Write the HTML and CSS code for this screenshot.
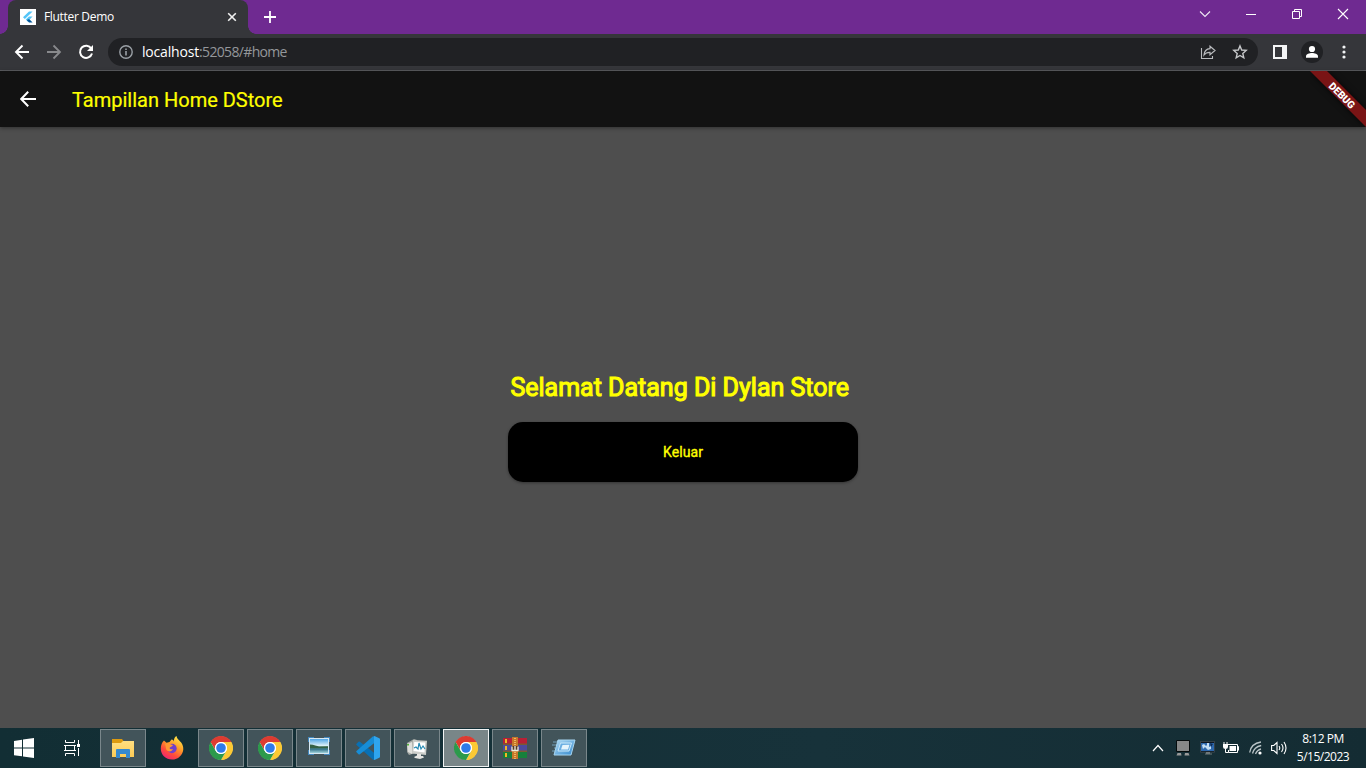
FILE: index.html
```html
<!DOCTYPE html>
<html lang="id">
<head>
<meta charset="utf-8">
<title>Flutter Demo</title>
<link rel="stylesheet" href="styles.css">
</head>
<body>
<svg width="0" height="0" class="defs">
  <defs>
    <linearGradient id="ff" x1="0.8" y1="0" x2="0.2" y2="1"><stop offset="0" stop-color="#fff04a"/><stop offset=".4" stop-color="#ff9a28"/><stop offset=".7" stop-color="#ff4a3c"/><stop offset="1" stop-color="#e8207a"/></linearGradient>
    <linearGradient id="folder" x1="0" y1="0" x2="0" y2="1"><stop offset="0" stop-color="#ffdf81"/><stop offset="1" stop-color="#fdcb55"/></linearGradient>
    <linearGradient id="sky" x1="0" y1="0" x2="0" y2="1"><stop offset="0" stop-color="#4fa6e6"/><stop offset=".5" stop-color="#e4f4f8"/><stop offset=".55" stop-color="#3c6e55"/><stop offset=".75" stop-color="#3e7b91"/><stop offset="1" stop-color="#9fd3dc"/></linearGradient>
    <linearGradient id="run" x1="0" y1="0" x2="1" y2="1"><stop offset="0" stop-color="#b3ddf7"/><stop offset="1" stop-color="#3388cc"/></linearGradient>
    <symbol id="chrome" viewBox="0 0 24 24">
      <circle cx="12" cy="12" r="11.500" fill="#fff"/>
      <path fill="#dd3c31" d="M1.600 6A12 12 0 0 1 22.400 6H12A6 6 0 0 0 6.800 15Z"/>
      <path fill="#fcc934" d="M22.400 6A12 12 0 0 1 12 24L17.200 15A6 6 0 0 0 12 6Z"/>
      <path fill="#2c9a4b" d="M12 24A12 12 0 0 1 1.600 6L6.800 15A6 6 0 0 0 17.200 15Z"/>
      <circle cx="12" cy="12" r="6.100" fill="#fff"/><circle cx="12" cy="12" r="4.800" fill="#2f7bea"/>
    </symbol>
  </defs>
</svg>
<div class="screen">
  <header class="tabstrip">
    <div class="tab">
      <svg class="favicon" width="16" height="16" viewBox="0 0 16 16"><path fill="#fff" d="M0 0h16v16H0z"/><path fill="#54c5f8" d="M9 2.500h3.600L4.900 10 3 8.200zM9 7.500h3.600L9.600 10.400l-2 2L5.800 10.600z"/><path fill="#01579b" d="m7.600 10.500 1.800-.2 3.200 3.200H9l-2-2z"/></svg>
      <span class="tab-title">Flutter Demo</span>
      <svg width="10" height="10" viewBox="0 0 10 10"><path d="m1.200 1.200 7.600 7.600m0-7.600L1.200 8.800" stroke="#f1f1f1" stroke-width="1.600"/></svg>
    </div>
    <svg class="newtab" width="12" height="12" viewBox="0 0 12 12"><path d="M6 0v12M0 6h12" stroke="#fff" stroke-width="1.800"/></svg>
    <div class="window-controls">
      <svg width="46" height="28" viewBox="0 0 46 28"><path d="m18 11.500 5 5 5-5" fill="none" stroke="#f0e8f4" stroke-width="1.100"/></svg>
      <svg width="46" height="28" viewBox="0 0 46 28"><path d="M18 14.500h10" stroke="#fff"/></svg>
      <svg width="46" height="28" viewBox="0 0 46 28"><path d="M18.500 11.500h7v7h-7zM20.500 11V9.500h7v7H26" fill="none" stroke="#fff"/></svg>
      <svg width="46" height="28" viewBox="0 0 46 28"><path d="m18 9 10 10m0-10L18 19" stroke="#fff" stroke-width="1.100"/></svg>
    </div>
  </header>
  <nav class="toolbar">
    <svg width="16" height="16" viewBox="0 0 16 16"><path d="M15 8H2m6.500-6.500L2 8l6.500 6.500" fill="none" stroke="#fff" stroke-width="1.900"/></svg>
    <svg width="16" height="16" viewBox="0 0 16 16"><path d="M1 8h13M7.500 1.500 14 8l-6.500 6.500" fill="none" stroke="#88898c" stroke-width="1.800"/></svg>
    <svg width="16" height="16" viewBox="0 0 16 16"><path d="M13.300 4.500A6.100 6.100 0 1 0 14 9.500" fill="none" stroke="#fff" stroke-width="2"/><path d="M15 1v6H9z" fill="#fff"/></svg>
    <div class="omnibox">
      <svg width="14" height="14" viewBox="0 0 14 14"><circle cx="7" cy="7" r="6.200" fill="none" stroke="#9aa0a6" stroke-width="1.400"/><path d="M7 6v4.500M7 3.500v1.600" stroke="#9aa0a6" stroke-width="1.600"/></svg>
      <span class="url"><span class="host">localhost</span>:52058/#home</span>
      <svg class="share" width="16" height="16" viewBox="0 0 16 16"><path d="M1.500 4v10.500h11V12" fill="none" stroke="#b9bbbe" stroke-width="1.100"/><path d="M10 2.200 15 6.500l-5 4.300V8.300C7 8.200 5.300 9.200 4 11c.3-3.500 2.500-6 6-6.300z" fill="none" stroke="#b9bbbe" stroke-width="1.200"/></svg>
      <svg width="16" height="16" viewBox="0 0 16 16"><path d="m8 1.900 1.700 4.100 4.500.4-3.400 3 1 4.400L8 11.500l-3.800 2.300 1-4.400-3.400-3 4.500-.4z" fill="none" stroke="#c6c8ca" stroke-width="1.400"/></svg>
    </div>
    <svg class="panel" width="14" height="14" viewBox="0 0 14 14"><path fill="#f4f5f6" fill-rule="evenodd" d="M0 0h14v14H0zM2 2v10h7V2z"/></svg>
    <svg class="avatar" width="22" height="22" viewBox="0 0 22 22"><circle cx="11" cy="11" r="11" fill="#202124"/><circle cx="11" cy="8" r="3.100" fill="#fff"/><path d="M5 16.800v-1.600c0-2.300 3.500-3.200 6-3.200s6 .9 6 3.200v1.600z" fill="#fff"/></svg>
    <svg class="kebab" width="4" height="14" viewBox="0 0 4 14"><g fill="#f1f3f4"><circle cx="2" cy="2" r="1.600"/><circle cx="2" cy="7" r="1.600"/><circle cx="2" cy="12" r="1.600"/></g></svg>
  </nav>
  <section class="appbar">
    <svg width="16" height="16" viewBox="0 0 16 16"><path d="M16 8H1.500M8.200.8 1.200 8l7 7.200" fill="none" stroke="#fff" stroke-width="2"/></svg>
    <h1>Tampillan Home DStore</h1>
    <svg class="debug" width="56" height="56" viewBox="0 0 56 56"><path class="ribbon" d="M0 0h17l39 39v17z"/><text transform="translate(32.200 24.300) rotate(45)" y="3.900" text-anchor="middle" textLength="32" lengthAdjust="spacingAndGlyphs">DEBUG</text></svg>
  </section>
  <main class="page">
    <div class="content">
      <h2>Selamat Datang Di Dylan Store</h2>
      <button class="exit">Keluar</button>
    </div>
  </main>
  <footer class="taskbar">
    <div class="system"><svg width="20" height="20" viewBox="0 0 20 20"><path fill="#fff" d="m0 3 8-1.200v7.700H0zm9-1.400L20 0v9.500H9zM0 10.500h8v7.800L0 17.200zm9 0h11V20L9 18.400z"/></svg></div>
    <div class="system"><svg width="16" height="16" viewBox="0 0 16 16"><path d="M1.500 0v2.500h9V0M1.500 5.500h9v5h-9zM1.500 16v-2.500h9V16M0 5.500h12M0 10.500h12M14.500 0v4m0 4v8" fill="none" stroke="#fff"/><path fill="#fff" d="M13 4h3v3h-3z"/></svg></div>
    <div class="tasks">
      <div class="task open"><svg width="24" height="24" viewBox="0 0 24 24"><path fill="#dc9a10" d="M1 3h10l1.500 2H23v4H1z"/><path fill="url(#folder)" d="M1 7h9l2-2h11v16H1z"/><path fill="#3589cf" d="M5 14q0-1 1-1h12q1 0 1 1v8h-4v-4H9v4H5z"/></svg></div>
      <div class="task"><svg width="24" height="24" viewBox="0 0 24 24"><path fill="url(#ff)" d="M4 4.500 6.500 6.800 9.500 6l2-2.500c1.500 0 2 .8 2.500 2C13.500 3 15 .8 16.500 0c.4 2.500 2 3.500 3.400 5.200C22 7 23.500 10 23.300 13.200 23 19 18 23.600 12 23.600S.8 19 .8 12.800C.8 9 2 6.500 4 4.500Z"/><circle cx="12" cy="12.500" r="4.700" fill="#7140cb"/><path fill="#ff9933" d="M5 8c2-1.500 4-1 6 .5l2 .5c-.5 2-3 1.500-3.500 3 .5 1.500 2 1.500 3.500 1-1 3-5 3-6.500 1C5.500 12 6 10 5 8Z"/></svg></div>
      <div class="task open"><svg width="24" height="24"><use href="#chrome"/></svg></div>
      <div class="task open"><svg width="24" height="24"><use href="#chrome"/></svg></div>
      <div class="task open"><svg width="24" height="24" viewBox="0 0 24 24"><path fill="#4387bd" d="M1 1h6v5H1zm16 0h6v5h-6zM1 14h6v5H1zm16 0h6v5h-6z"/><path fill="#d6e8f2" d="M2 2h20v16H2z"/><path fill="url(#sky)" d="M3 3h18v14H3z"/><path fill="#346044" d="M3 8.500q6 .5 9 2.500l9-.5V12H3z"/></svg></div>
      <div class="task open"><svg class="code" width="24" height="24" viewBox="0 0 24 24"><path fill="#0870b4" d="m.3 8 2.200-2.200q.7-.5 1.400 0L18 16.700V23q0 1-1 .7L.5 9q-.5-.5-.2-1z"/><path fill="#178dd6" d="m.3 16 2.200 2.200q.7.500 1.400 0L18 7.300V1q0-1-1-.7L.5 15q-.5.500-.2 1z"/><path fill="#2fa5ee" d="M18 .2q.4-.3 1 0l4.300 2q.7.300.7 1v17.600q0 .7-.7 1l-4.300 2q-.6.300-1 0-.3-.2 0-.8z"/></svg></div>
      <div class="task open"><svg width="24" height="24" viewBox="0 0 24 24"><path fill="#a5a9a5" d="m2 7 7-4 3 1-2 13-6 2-2-3z"/><path fill="#dfe0dc" d="m2 8 5-2v12l-4-2z"/><path fill="#ccceca" d="m8 4 14 .8L21 19 7 17.500z"/><path fill="#fff" d="m9.300 6 11 .6-.8 9.800L8.500 15z"/><path d="m9 12 2-1 2 2 1-6 2 6 2-3 2 3" fill="none" stroke="#278bb4" stroke-width="1.200"/><path fill="#e5e5e2" d="M12 18h4v2h2l1 1.500-4 1.500-5-1-1-1 3-1.500z"/><path fill="#53b63a" d="M2 8h2v1.500H2z"/></svg></div>
      <div class="task active"><svg width="24" height="24"><use href="#chrome"/></svg></div>
      <div class="task open"><svg width="24" height="22" viewBox="0 0 24 22"><path fill="#b82036" d="M0 1h24v6H0z"/><path fill="#4d4a9d" d="M0 8h24v6H0z"/><path fill="#16803b" d="M0 15h24v6H0z"/><path fill="#7c5932" d="M0 6.500h24V8H0zm0 7h24V15H0z"/><path fill="#f2b824" d="M2 2h2v4H2zm0 7h2v4H2zm0 7h2v4H2z"/><path fill="#c7772b" d="M9 0h6v22H9z"/><path d="M12 1v9m0 5v7" stroke="#f0b65e" stroke-dasharray="1 1" stroke-width="2"/><path fill="#593a24" d="M9 9h6v5H9z"/><path d="M9 9.500v4h6v-4M12 9v4" fill="none" stroke="#ededde" stroke-width="1.300"/></svg></div>
      <div class="task open"><svg width="24" height="24" viewBox="0 0 24 24"><path d="M1 6h7M0 9h7M2 12h6M0 15h6" stroke="#729fb8"/><path fill="url(#run)" stroke="#a7d5f0" d="M6 4h17l-4 15H2z"/><path fill="#6baee2" stroke="#c7e7fa" d="M8.500 7h11L17 15H6z"/><path fill="#e6f4fc" d="m10.500 9 7-.2-1.500 4.700H9z"/></svg></div>
    </div>
    <div class="tray">
      <svg class="more" width="12" height="8" viewBox="0 0 12 8"><path d="m1 7 5-5.500L11 7" fill="none" stroke="#fff" stroke-width="1.200"/></svg>
      <svg class="display" width="14" height="16" viewBox="0 0 14 16"><path fill="#888" stroke="#050b0c" d="M.5.5h13v11H.5z"/><path fill="#999" d="M1.500 13H5l.5 2.500H.5zm7.500 0h3.500l1 2.500h-5z"/></svg>
      <svg width="15" height="14" viewBox="0 0 15 14"><path fill="#0d1722" stroke="#4b5558" stroke-width=".7" d="M.4.400h14.200v10.800H.4z"/><path fill="#6e787a" d="M6 11h4v1.500h2v1H5v-1h1z"/><path fill="#2d68ad" d="M1 2h13v8H1z"/><path fill="#c4def3" d="m2 4 2-1 2 2 1-1V2h2v4l2-1v3L8 9 5 6 3 8z"/><path fill="#102c52" d="m10 2 3 1-2 3z"/></svg>
      <svg class="battery" width="16" height="12" viewBox="0 0 16 12"><path d="M5 2.500h9.500v8h-9V8M14.500 4.500h1v4" fill="none" stroke="#fff"/><path fill="#fff" d="M6.500 4H13v5H6.500zM0 2h5v3Q5 7 2.500 7T0 5z"/><path d="M1 0v2m3-2v2M2.500 7v3.500h3" fill="none" stroke="#fff"/></svg>
      <svg class="wifi" width="14" height="14" viewBox="0 0 14 14"><path d="M.7 11.500Q2 2.500 12 1M3.500 12.500Q5 6 12.200 4.500M6.500 13Q8 9 12 8" fill="none" stroke="#b9c4c7" stroke-width="1.300"/><circle cx="11" cy="12" r="1.600" fill="#fff"/></svg>
      <svg width="17" height="14" viewBox="0 0 17 14"><path d="M.6 4.500h2.200L6 1.500v11l-3.200-3H.6zM8 5q1.500 2 0 4M10.500 3q3 4 0 8M13 1q4 6 0 12" fill="none" stroke="#fff" stroke-width="1.100"/></svg>
      <div class="clock"><span class="time">8:12 PM</span><span class="date">5/15/2023</span></div>
    </div>
  </footer>
</div>
</body>
</html>
```

FILE: styles.css
```css
* { box-sizing: border-box; }
body { margin: 0; overflow: hidden; font-family: "Open Sans", sans-serif; }
svg { display: block; flex: none; }
.defs { position: absolute; }
.screen { width: 1366px; height: 768px; display: flex; flex-direction: column; }

.tabstrip { height: 34px; background: #6f2a91; display: flex; align-items: flex-start; padding-left: 8px; }
.tab { position: relative; width: 240px; height: 34px; background: #35363a; border-radius: 8px 8px 0 0; display: flex; align-items: center; padding: 0 11px 0 12px; color: #fff; font: 12px "Open Sans", sans-serif; }
.tab::before, .tab::after { content: ""; position: absolute; bottom: 0; width: 8px; height: 8px; }
.tab::before { left: -8px; background: radial-gradient(circle at 0 0, transparent 7.5px, #35363a 8px); }
.tab::after { right: -8px; background: radial-gradient(circle at 100% 0, transparent 7.5px, #35363a 8px); }
.favicon { margin-right: 8px; }
.tab-title { flex: 1; padding-bottom: 2px; letter-spacing: -0.32px; }
.newtab { margin: 11px 0 0 16px; }
.window-controls { display: flex; margin-left: auto; }

.toolbar { height: 37px; background: #35363a; border-bottom: 1px solid #5c5d61; display: flex; align-items: center; padding: 0 20px 0 14px; gap: 16px; }
.omnibox { width: 1150px; height: 28px; margin-left: -2px; border-radius: 14px; background: #202124; display: flex; align-items: center; padding: 0 10px 0 11px; }
.url { margin-left: 9px; padding-bottom: 1px; color: #94979b; font-size: 14px; letter-spacing: -0.66px; white-space: nowrap; }
.host { color: #fff; letter-spacing: -0.18px; }
.share { margin: 0 16px 0 auto; }
.panel { margin-left: -1px; }
.avatar { margin-left: -2px; }
.kebab { margin-left: 3px; }

.appbar { position: relative; z-index: 1; height: 56px; background: #121212; display: flex; align-items: center; padding-left: 20px; gap: 36px; box-shadow: 0 1px 4px rgba(0,0,0,.4); font-family: Roboto, sans-serif; }
.appbar h1 { margin: 2px 0 0; color: #ff0; font-size: 20px; font-weight: 400; line-height: 24px; -webkit-text-stroke: 0.2px #ff0; }
.debug { position: absolute; top: 0; right: 0; }
.ribbon { fill: #7a1415; filter: drop-shadow(0 0 3px rgba(0,0,0,.7)); }
.debug text { fill: #fff; font: 900 10.2px Roboto, sans-serif; }

.page { height: 601px; background: #4e4e4e; padding-top: 243px; font-family: Roboto, sans-serif; }
.content { width: 350px; margin: 0 auto; }
.content h2 { height: 36px; margin: 0 0 16px; padding-left: 2.4px; line-height: 36px; font-size: 25px; font-weight: 400; color: #ff0; -webkit-text-stroke: 1.1px #ff0; white-space: nowrap; }
.exit { display: block; width: 350px; height: 60px; border: 0; border-radius: 15px; background: #000; color: #ff0; font: 400 14px Roboto, sans-serif; letter-spacing: 0.1px; -webkit-text-stroke: 0.35px #ff0; box-shadow: 0 1px 3px rgba(0,0,0,.35); }

.taskbar { height: 40px; background: linear-gradient(90deg, #122e34, #17323a 60%, #142c33); display: flex; align-items: center; }
.system { width: 48px; display: flex; justify-content: center; }
.tasks { display: flex; gap: 3px; margin-left: 4px; }
.task { width: 46px; height: 38px; display: flex; align-items: center; justify-content: center; }
.open { border: 1px solid #7a878b; background: #42545a; }
.active { border: 1px solid #f0f3f3; background: #798688; }
.tray { margin-left: auto; padding-right: 12px; display: flex; align-items: center; gap: 8px; color: #fff; }
.more { margin-right: 4px; }
.display { margin-right: 2px; }
.wifi { margin-left: 2px; }
.clock { width: 62px; margin-left: -4px; font-size: 12px; line-height: 18px; display: flex; flex-direction: column; align-items: center; white-space: nowrap; letter-spacing: -0.5px; }
```
